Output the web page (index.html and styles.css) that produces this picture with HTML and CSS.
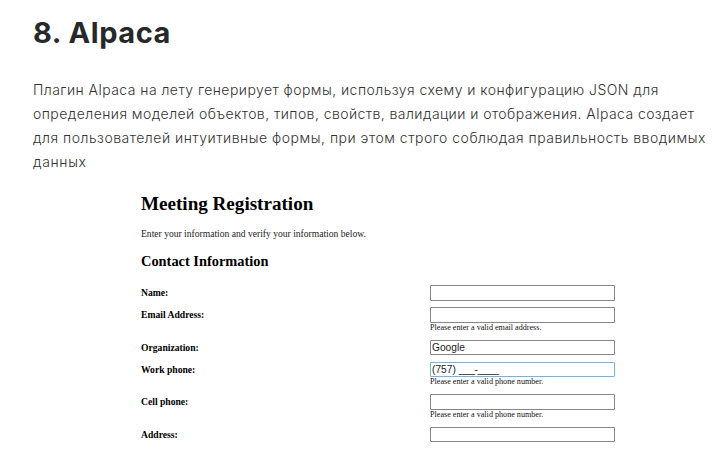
FILE: index.html
```html
<!DOCTYPE html>
<html lang="ru">
<head>
<meta charset="utf-8">
<title>Alpaca</title>
<link rel="stylesheet" href="styles.css">
</head>
<body>
<main>
<h1>8. Alpaca</h1>
<p class="intro"><span class="l1">Плагин Alpaca на лету генерирует формы, используя схему и конфигурацию JSON для</span><br><span class="l2">определения моделей объектов, типов, свойств, валидации и отображения. Alpaca создает</span><br><span class="l3">для пользователей интуитивные формы, при этом строго соблюдая правильность вводимых</span><br><span class="l4">данных</span></p>
<form class="form">
<h2>Meeting Registration</h2>
<p class="lead">Enter your information and verify your information below.</p>
<h3>Contact Information</h3>
<div class="row"><label>Name:</label><div><div class="box"></div></div></div>
<div class="row help"><label>Email Address:</label><div><div class="box"></div><p>Please enter a valid email address.</p></div></div>
<div class="row"><label>Organization:</label><div><div class="box">Google</div></div></div>
<div class="row help"><label>Work phone:</label><div><div class="box focus">(757) <span class="mask">___-____</span></div><p>Please enter a valid phone number.</p></div></div>
<div class="row help"><label>Cell phone:</label><div><div class="box"></div><p>Please enter a valid phone number.</p></div></div>
<div class="row"><label>Address:</label><div><div class="box"></div></div></div>
</form>
</main>
</body>
</html>
```
FILE: styles.css
```css
* { box-sizing: border-box; }
body { margin: 0; background: #fff; overflow: hidden; }
main { padding: 13px 0 0 33px; height: 460px; }
h1, h2, h3, p { margin: 0; white-space: nowrap; }
h1 { font: 700 29px/40px Inter, sans-serif; color: #262829; letter-spacing: 0.55px; }
.intro { margin-top: 25px; font: 300 14px/24px Inter, sans-serif; color: #333; }
.l1 { letter-spacing: 0.45px; }
.l2 { letter-spacing: 0.43px; }
.l3 { letter-spacing: 0.5px; }
.l4 { letter-spacing: 0.65px; }
.form { margin: 18px 0 0 108px; font-family: "Liberation Serif", serif; color: #000; }
h2 { font-size: 19.1px; line-height: 24px; }
.lead { margin-top: 12px; font-size: 9.58px; line-height: 12px; color: #222; }
h3 { margin: 12px 0 15px; font-size: 14.4px; line-height: 18px; }
.row { display: grid; grid-template-columns: 289px 185px; height: 22px; }
.row.help { height: 32.5px; }
label { font-size: 9.65px; line-height: 16px; font-weight: 700; }
.box { height: 15.5px; border: 1px solid #858585; border-radius: 1px; padding-left: 1px; font: 10.2px/14px "Liberation Sans", sans-serif; color: #222; white-space: nowrap; }
.focus { border-color: #71b5e2; }
.mask { letter-spacing: -0.4px; }
.row p { font-size: 8.15px; line-height: 10px; color: #111; }
```
